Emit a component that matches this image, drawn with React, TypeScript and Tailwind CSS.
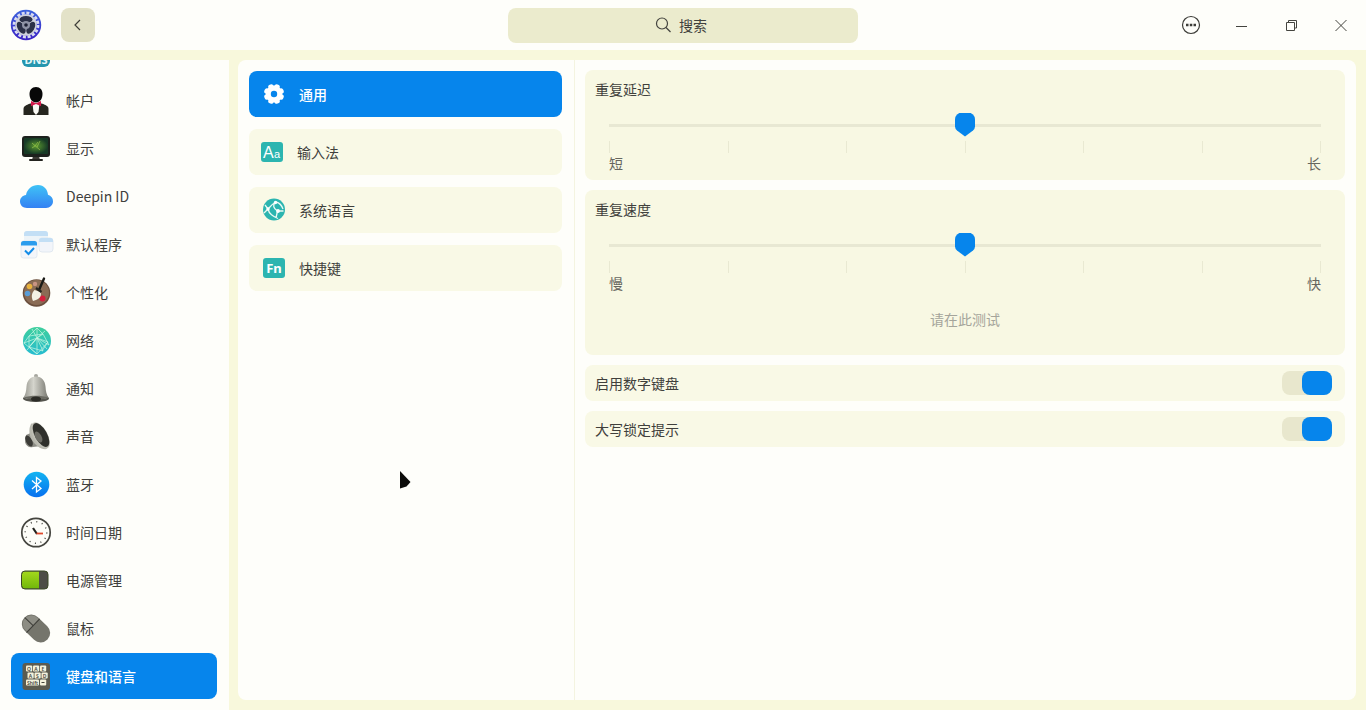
import { useState } from "react";
import type { ReactNode } from "react";

/* Sidebar artwork: every icon is drawn on a 32x32 grid */

function Art({ children }: { children: ReactNode }) {
  return (
    <svg viewBox="0 -1 32 32" className="h-8 w-8 shrink-0 overflow-visible" aria-hidden="true">
      {children}
    </svg>
  );
}

function AppLogo() {
  return (
    <svg viewBox="0 0 32 32" className="h-8 w-8 shrink-0" aria-hidden="true">
      <defs>
        <linearGradient id="logo" x1="0" y1="0" x2="0" y2="1">
          <stop offset="0" stopColor="#3d63dc" />
          <stop offset="1" stopColor="#3b22c4" />
        </linearGradient>
      </defs>
      <circle cx="16" cy="16" r="15.200" fill="url(#logo)" />
      <circle cx="16" cy="16" r="12" fill="none" stroke="#d9dcf2" strokeWidth="2.800" strokeDasharray="3 1.712" />
      <circle cx="16" cy="16" r="10.800" fill="#cfd1dc" />
      <ellipse cx="16" cy="10.500" rx="6.500" ry="3.600" fill="#2c3148" />
      <ellipse cx="16" cy="10.500" rx="6.500" ry="3.600" fill="#2c3148" transform="rotate(120 16 16)" />
      <ellipse cx="16" cy="10.500" rx="6.500" ry="3.600" fill="#2c3148" transform="rotate(240 16 16)" />
      <circle cx="16" cy="16" r="4" fill="#8f93a6" />
      <circle cx="16" cy="16" r="1.800" fill="#1d2034" />
    </svg>
  );
}

function BootIcon() {
  return (
    <Art>
      <rect x="2" y="3" width="28" height="27" rx="6" fill="#2596ae" />
      <text x="16" y="27" textAnchor="middle" fontSize="11" fontWeight="700" fill="#e5f7f8" fontFamily="Noto Sans">
        DNS
      </text>
    </Art>
  );
}

function AccountIcon() {
  return (
    <Art>
      <path d="M3.500 30V24c0-2.500 2-4 7-5.500h11c5 1.500 7 3 7 5.500v6z" fill="#26261f" />
      <path d="M12.500 18.500h7L18.500 27 16 30l-2.500-3z" fill="#fafaf5" />
      <path d="M16 2c4.200 0 6.500 3 6.500 7 0 4.500-2.500 8.500-6.500 8.500S9.500 13.500 9.500 9c0-4 2.300-7 6.500-7z" fill="#080808" />
      <path d="M11 16l5 2.200L21 16v5.200L16 19l-5 2.200z" fill="#d3184a" />
    </Art>
  );
}

function DisplayIcon() {
  return (
    <Art>
      <defs>
        <radialGradient id="screen">
          <stop offset="0" stopColor="#5b9a30" />
          <stop offset="1" stopColor="#173a26" />
        </radialGradient>
      </defs>
      <path d="M12 27l1-4h6l1 4z" fill="#3a3a34" />
      <rect x="9" y="26" width="14" height="2" rx="1" fill="#23231f" />
      <rect x="2" y="3" width="28" height="21" rx="3" fill="#1d211d" />
      <rect x="4" y="5" width="24" height="16" rx="1" fill="url(#screen)" />
      <path d="M12 10l8 7M18 9l-3 4-3 2M20 8l-3 6" fill="none" stroke="#9ac54a" opacity=".7" />
    </Art>
  );
}

function CloudIcon() {
  return (
    <Art>
      <defs>
        <linearGradient id="cloud" x1="0" y1="0" x2="0" y2="1">
          <stop offset="0" stopColor="#3fc3f6" />
          <stop offset="1" stopColor="#3481f3" />
        </linearGradient>
      </defs>
      <path
        d="M7 27C3 27 0 24.200 0 20.500c0-3.500 2.500-6 6-6.500C7.200 8 12 4 18 4c6 0 9.500 4.500 10 9.800 3.200.8 5 3.500 5 6.500 0 3.900-3 6.700-7 6.700z"
        fill="url(#cloud)"
      />
    </Art>
  );
}

function DefaultAppsIcon() {
  return (
    <Art>
      <rect x="4" y="2" width="24" height="16" rx="3" fill="#edf4f8" />
      <path d="M4 7V5a3 3 0 0 1 3-3h18a3 3 0 0 1 3 3v2z" fill="#c3dff5" />
      <rect x="19" y="9" width="14" height="14" rx="3" fill="#f2f5fa" stroke="#dce4ee" strokeWidth=".8" />
      <path d="M19 13v-1.500a2.500 2.500 0 0 1 2.500-2.500h9A2.500 2.500 0 0 1 33 11.500V13z" fill="#c3dff5" />
      <rect x="1" y="12" width="16" height="17" rx="2.500" fill="#f3f6fa" stroke="#dce4ee" strokeWidth=".8" />
      <path d="M1 16.500v-2A2.500 2.500 0 0 1 3.500 12h11a2.500 2.500 0 0 1 2.500 2.500v2z" fill="#2a9ced" />
      <path d="M5 21.500l3.500 3.500 5.500-6" fill="none" stroke="#128ce8" strokeWidth="2" />
    </Art>
  );
}

function PaletteIcon() {
  return (
    <Art>
      <circle cx="16.500" cy="16" r="13.800" fill="#6c503e" />
      <circle cx="16.500" cy="15.500" r="12.500" fill="#8a6c55" />
      <circle cx="9.500" cy="9.500" r="2.800" fill="#e8b23d" />
      <circle cx="7.500" cy="16.500" r="2.800" fill="#5a9dd6" />
      <circle cx="15" cy="7" r="2.200" fill="#c99483" />
      <circle cx="22.500" cy="21.500" r="3" fill="#d4203d" />
      <path d="M24 1.500L19 13" stroke="#1a1a16" strokeWidth="2.400" strokeLinecap="round" />
      <path d="M14.500 13l6 2c1.500 4-1 7.500-7.500 9-2-4-1.500-8 1.500-11z" fill="#f4f1e5" />
      <path d="M16 11l5.500 4" stroke="#252520" strokeWidth="2.200" />
    </Art>
  );
}

function NetworkIcon() {
  return (
    <Art>
      <defs>
        <linearGradient id="net" x1="0" y1="0" x2="0" y2="1">
          <stop offset="0" stopColor="#3fcf9c" />
          <stop offset="1" stopColor="#26bcd0" />
        </linearGradient>
      </defs>
      <circle cx="17" cy="16" r="14" fill="url(#net)" />
      <path
        d="M17 3l-8 8-5 7 13-5 12 7-6-11-6-6v26l-8-7 8-9 11 4-6 9M9 11l0 11 8-9 6-4-14 2M4 18l13 11 11-12M9 22l14 4M17 13l6 13M17 13L7 25M17 13l8-7M17 13l10 11M12 4l5 9"
        fill="none"
        stroke="#c5f7e3"
        strokeWidth=".7"
      />
    </Art>
  );
}

function BellIcon() {
  return (
    <Art>
      <defs>
        <linearGradient id="bell">
          <stop offset="0" stopColor="#97978f" />
          <stop offset=".4" stopColor="#d5d5cd" />
          <stop offset="1" stopColor="#77776f" />
        </linearGradient>
      </defs>
      <circle cx="16" cy="3" r="2" fill="#a6a69e" />
      <ellipse cx="16" cy="25.500" rx="13" ry="3.500" fill="#55554e" />
      <path d="M16 3.500c6 0 9 4.500 9.500 10 .3 5 1 8 3 11-3 2.500-22 2.500-25 0 2-3 2.700-6 3-11C7 8 10 3.500 16 3.500z" fill="url(#bell)" />
      <path d="M4 24.500c6-2.500 18-2.500 24 0-3 2.500-21 2.500-24 0z" fill="#6b6b63" />
      <ellipse cx="16" cy="26" rx="5" ry="2.500" fill="#2c2c27" />
    </Art>
  );
}

function SpeakerIcon() {
  return (
    <Art>
      <path d="M6 14l-1 7c1 4 4 6 8 5l8-1-8-14z" fill="#8c8c84" />
      <ellipse cx="9" cy="20" rx="3" ry="6" transform="rotate(-28 9 20)" fill="#3c3c37" />
      <path d="M12 2c-3 3-4 11 0 17s9 10 15 9z" fill="#b8b8ae" />
      <ellipse cx="20.500" cy="14.500" rx="7" ry="14.500" transform="rotate(-29 20.500 14.500)" fill="#c0c0b6" />
      <ellipse cx="21" cy="14" rx="6" ry="13.200" transform="rotate(-29 21 14)" fill="#2f302b" />
      <ellipse cx="18.500" cy="16" rx="3" ry="6" transform="rotate(-29 18.500 16)" fill="#6d6d65" />
    </Art>
  );
}

function BluetoothIcon() {
  return (
    <Art>
      <defs>
        <linearGradient id="bt" x1="0" y1="0" x2="0" y2="1">
          <stop offset="0" stopColor="#12b4f1" />
          <stop offset="1" stopColor="#0870ef" />
        </linearGradient>
      </defs>
      <circle cx="16.500" cy="15.500" r="12.800" fill="url(#bt)" />
      <path d="M12 11.500l9 8-4.500 3.500V8.500l4.500 3.500-9 8" fill="none" stroke="#fff" strokeWidth="1.300" />
    </Art>
  );
}

function ClockIcon() {
  return (
    <Art>
      <circle cx="16" cy="15.500" r="14.200" fill="#fdfdf8" stroke="#45453f" strokeWidth="1.700" />
      <circle cx="16" cy="15.500" r="10.800" fill="none" stroke="#45453f" strokeWidth="1.500" strokeDasharray="1 4.655" />
      <path d="M13 11l4 6" stroke="#22221e" strokeWidth="2.200" />
      <path d="M16.500 16.500H23" stroke="#e0492c" strokeWidth="1.800" />
    </Art>
  );
}

function PowerIcon() {
  return (
    <Art>
      <defs>
        <linearGradient id="power" x1="0" y1="0" x2="0" y2="1">
          <stop offset="0" stopColor="#a3d81c" />
          <stop offset="1" stopColor="#72b80a" />
        </linearGradient>
      </defs>
      <rect x="1.500" y="6" width="26.500" height="18" rx="3.500" fill="#4d4d46" />
      <path d="M19 6.500v17H5a3 3 0 0 1-3-3V9.500a3 3 0 0 1 3-3z" fill="url(#power)" />
      <rect x="1.500" y="6" width="26.500" height="18" rx="3.500" fill="none" stroke="#3b4a24" />
    </Art>
  );
}

function MouseIcon() {
  return (
    <Art>
      <g transform="rotate(-46 16 15.500)">
        <rect x="6.500" y="-.5" width="19" height="32" rx="9.500" fill="#75756c" />
        <path d="M7.500 11V9A8.500 8.500 0 0 1 24.500 9v2z" fill="#8d8d84" />
        <path d="M6.500 11.500h19M16 0v11.500" stroke="#3e3e39" />
      </g>
    </Art>
  );
}

function KeyboardIcon() {
  const rows = [
    { x: 6, y: 4.5, keys: ["Q", "A", "E"] },
    { x: 7.5, y: 11.5, keys: ["A", "S", "D"] },
  ];
  return (
    <Art>
      <rect x="2.500" y="2" width="27.500" height="27" rx="3" fill="#5b5b50" />
      {rows.map((row) =>
        row.keys.map((key, k) => (
          <g key={key}>
            <rect x={row.x + k * 7} y={row.y} width="6.200" height="6" rx="1" fill="#f4f2dc" />
            <text
              x={row.x + 3 + k * 7}
              y={row.y + 5}
              textAnchor="middle"
              fontSize="5"
              fontWeight="600"
              fill="#45453b"
              fontFamily="Noto Sans"
            >
              {key}
            </text>
          </g>
        ))
      )}
      <rect x="6" y="18.500" width="13" height="6" rx="1" fill="#f4f2dc" />
      <text x="12.500" y="23.500" textAnchor="middle" fontSize="5" fontWeight="600" fill="#45453b" fontFamily="Noto Sans">
        Shift
      </text>
      <rect x="20" y="18.500" width="6.200" height="6" rx="1" fill="#f4f2dc" />
      <path d="M21.500 21.500h3" stroke="#45453b" />
    </Art>
  );
}

/* Sub-page icons */

function GearIcon() {
  return (
    <svg viewBox="0 0 24 24" className="h-6 w-6 shrink-0" aria-hidden="true">
      <circle cx="13" cy="12" r="8.400" fill="#fff" />
      {[0, 45, 90, 135].map((deg) => (
        <rect key={deg} x="10.200" y="1.800" width="5.600" height="20.400" rx="2.400" transform={`rotate(${deg + 22.5} 13 12)`} fill="#fff" />
      ))}
      <circle cx="13" cy="12" r="3.200" fill="#0685ec" />
    </svg>
  );
}

function InputMethodIcon() {
  return (
    <svg viewBox="0 0 22 24" className="h-6 w-[22px] shrink-0" aria-hidden="true">
      <rect x="0" y="2" width="22" height="20" rx="3" fill="#2cb5b0" />
      <text x="2" y="18" fontSize="16" fill="#fff" fontFamily="Liberation Sans">
        A
      </text>
      <text x="13" y="18" fontSize="11" fill="#fff" fontFamily="Liberation Sans">
        a
      </text>
    </svg>
  );
}

function GlobeIcon() {
  return (
    <svg viewBox="0 0 24 24" className="h-6 w-6 shrink-0" aria-hidden="true">
      <circle cx="13" cy="11.500" r="11" fill="#2cb5b0" />
      <path
        d="M4 7l3 4c3-4 6-6 8-7M7 11c1 5 5 7 10 9.500M14 4c-2 4-2 6 2.500 9l6 0M16.500 13l-1.500 7M15 4c4 1 6 4 7 7M7 11l-4 4"
        fill="none"
        stroke="#eafaf4"
        strokeWidth="1.300"
      />
      <circle cx="7" cy="11" r="1.700" fill="#fff" />
      <circle cx="14.500" cy="4.500" r="1.700" fill="#fff" />
      <circle cx="17" cy="13" r="1.900" fill="#fff" />
    </svg>
  );
}

function FnIcon() {
  return (
    <svg viewBox="0 0 24 24" className="h-6 w-6 shrink-0" aria-hidden="true">
      <rect x="2" y="2" width="22" height="20" rx="3" fill="#2cb5b0" />
      <text x="13" y="17" textAnchor="middle" fontSize="13" fontWeight="700" fill="#fff" fontFamily="Noto Sans">
        Fn
      </text>
    </svg>
  );
}

const MODULES = [
  { label: "启动设置", icon: <BootIcon /> },
  { label: "帐户", icon: <AccountIcon /> },
  { label: "显示", icon: <DisplayIcon /> },
  { label: "Deepin ID", icon: <CloudIcon /> },
  { label: "默认程序", icon: <DefaultAppsIcon /> },
  { label: "个性化", icon: <PaletteIcon /> },
  { label: "网络", icon: <NetworkIcon /> },
  { label: "通知", icon: <BellIcon /> },
  { label: "声音", icon: <SpeakerIcon /> },
  { label: "蓝牙", icon: <BluetoothIcon /> },
  { label: "时间日期", icon: <ClockIcon /> },
  { label: "电源管理", icon: <PowerIcon /> },
  { label: "鼠标", icon: <MouseIcon /> },
  { label: "键盘和语言", icon: <KeyboardIcon /> },
];

const PAGES = [
  { label: "通用", icon: <GearIcon /> },
  { label: "输入法", icon: <InputMethodIcon /> },
  { label: "系统语言", icon: <GlobeIcon /> },
  { label: "快捷键", icon: <FnIcon /> },
];

function TitleBar() {
  return (
    <header className="grid h-[50px] shrink-0 grid-cols-[1fr_350px_1fr] items-center">
      <div className="flex items-center gap-[19px] pl-[10px]">
        <AppLogo />
        <button
          type="button"
          aria-label="返回"
          className="flex h-[34px] w-[34px] items-center justify-center rounded-lg bg-[#e3e2c8]"
        >
          <svg viewBox="0 0 16 16" className="h-4 w-4" fill="none" stroke="#3d3d38" strokeWidth="1.200">
            <path d="M10 3L5 8l5 5" />
          </svg>
        </button>
      </div>

      <button
        type="button"
        className="flex h-[35px] items-center justify-center gap-2 rounded-lg bg-[#ebebcd] pr-1"
      >
        <svg viewBox="0 0 16 16" className="h-4 w-4" fill="none" stroke="#44443f" strokeWidth="1.200">
          <circle cx="7" cy="6.500" r="5.500" />
          <path d="M11 10.500l4.500 4.500" />
        </svg>
        搜索
      </button>

      <div className="flex justify-end">
        <button type="button" aria-label="菜单" className="flex h-[50px] w-[50px] items-center justify-center">
          <svg viewBox="0 0 20 20" className="h-5 w-5" fill="none" stroke="#3d3d38">
            <circle cx="10" cy="10" r="8.500" strokeWidth="1.200" />
            <path d="M5 10h2.500M8.800 10h2.500M12.500 10H15" strokeWidth="2.400" />
          </svg>
        </button>
        <button type="button" aria-label="最小化" className="flex h-[50px] w-[50px] items-center justify-center">
          <svg viewBox="0 0 12 12" className="h-3 w-3" stroke="#44443f">
            <path d="M1 7.500h11" />
          </svg>
        </button>
        <button type="button" aria-label="还原" className="flex h-[50px] w-[50px] items-center justify-center">
          <svg viewBox="0 0 12 12" className="h-3 w-3" fill="none" stroke="#44443f">
            <path d="M1.500 3.500h8v8h-8zM3.500 3.500v-2h8v7.500H10" />
          </svg>
        </button>
        <button type="button" aria-label="关闭" className="flex h-[50px] w-[50px] items-center justify-center">
          <svg viewBox="0 0 12 12" className="h-3 w-3" stroke="#44443f">
            <path d="M.5 1l11 11M11.500 1l-11 11" />
          </svg>
        </button>
      </div>
    </header>
  );
}

function SliderCard({
  id,
  title,
  from,
  to,
  children,
}: {
  id: string;
  title: string;
  from: string;
  to: string;
  children?: ReactNode;
}) {
  return (
    <section className="rounded-lg bg-[#f8f8e3] px-[10px] py-[7px]">
      <label htmlFor={id} className="block leading-6">
        {title}
      </label>
      <div className="px-[14px] pt-3">
        <input
          id={id}
          type="range"
          min={1}
          max={7}
          defaultValue={4}
          className="block h-6 w-full appearance-none bg-transparent [&::-webkit-slider-runnable-track]:h-[3px] [&::-webkit-slider-runnable-track]:bg-[#e8e8d3] [&::-webkit-slider-thumb]:mt-[-11px] [&::-webkit-slider-thumb]:h-6 [&::-webkit-slider-thumb]:w-5 [&::-webkit-slider-thumb]:appearance-none [&::-webkit-slider-thumb]:bg-[#0685ec] [&::-webkit-slider-thumb]:[clip-path:path('M7_0h6a7_7_0_0_1_7_7v7q0_2_-2_4l-8_6l-8_-6q-2_-2_-2_-4v-7a7_7_0_0_1_7_-7z')]"
        />
        <div className="flex justify-between pt-1" aria-hidden="true">
          {Array.from({ length: 7 }, (_, i) => (
            <span key={i} className="h-3 w-px bg-[#e9e9d2]" />
          ))}
        </div>
        <div className="flex justify-between leading-5 text-[#66665f]">
          <span>{from}</span>
          <span>{to}</span>
        </div>
      </div>
      {children}
    </section>
  );
}

function SwitchCard({ label }: { label: string }) {
  return (
    <label className="flex h-9 items-center justify-between rounded-lg bg-[#f9f9e6] pr-[13px] pl-[10px]">
      {label}
      <input
        type="checkbox"
        role="switch"
        defaultChecked
        className="h-6 w-[50px] appearance-none rounded-lg bg-[#e8e7cd] before:block before:h-6 before:w-[30px] before:rounded-lg before:bg-[#b9b9a6] checked:before:ml-5 checked:before:bg-[#0685ec]"
      />
    </label>
  );
}

export default function App() {
  const [module, setModule] = useState("键盘和语言");
  const [page, setPage] = useState("通用");

  return (
    <div className="relative flex h-screen flex-col overflow-hidden bg-[#fefefa] font-['Noto_Sans_CJK_SC',sans-serif] text-sm text-[#40403c]">
      <TitleBar />
      <div className="h-[10px] shrink-0 bg-[#f8f8dc]" />

      <div className="flex min-h-0 flex-1">
        {/* The list is scrolled to its end, so the first module is cut off */}
        <nav className="flex w-[229px] shrink-0 flex-col justify-end gap-[2px] overflow-hidden pr-3 pb-[11px] pl-[11px]">
          {MODULES.map((item) => (
            <button
              key={item.label}
              type="button"
              onClick={() => setModule(item.label)}
              className={`flex h-[46px] shrink-0 items-center gap-[14px] rounded-lg pl-[9px] ${
                module === item.label ? "bg-[#0685ec] font-medium text-white" : ""
              }`}
            >
              {item.icon}
              {item.label}
            </button>
          ))}
        </nav>

        <div className="flex min-w-0 flex-1 bg-[#f8f8dc] pr-[10px] pb-[10px] pl-[9px]">
          <main className="flex min-w-0 flex-1 rounded-lg bg-[#fefefa]">
            <div className="flex w-[337px] shrink-0 flex-col gap-3 border-r border-[#f4f4e0] pt-[11px] pr-3 pl-[11px]">
              {PAGES.map((item) => (
                <button
                  key={item.label}
                  type="button"
                  onClick={() => setPage(item.label)}
                  className={`flex h-[46px] items-center gap-[14px] rounded-lg pl-3 ${
                    page === item.label ? "bg-[#0685ec] font-medium text-white" : "bg-[#f9f9e6]"
                  }`}
                >
                  {item.icon}
                  {item.label}
                </button>
              ))}
            </div>

            <div className="flex min-w-0 flex-1 flex-col gap-[10px] pt-[10px] pr-[11px] pl-[10px]">
              <SliderCard id="delay" title="重复延迟" from="短" to="长" />
              <SliderCard id="rate" title="重复速度" from="慢" to="快">
                <input
                  type="text"
                  aria-label="请在此测试"
                  placeholder="请在此测试"
                  className="mt-2 mb-[11px] block h-9 w-full bg-transparent text-center placeholder:text-[#a5a59b]"
                />
              </SliderCard>
              <SwitchCard label="启用数字键盘" />
              <SwitchCard label="大写锁定提示" />
            </div>
          </main>
        </div>
      </div>

      {/* Mouse pointer */}
      <svg viewBox="0 0 14 20" className="pointer-events-none absolute top-[470px] left-[398px] h-5 w-[14px]" aria-hidden="true">
        <path d="M2 1l10.500 11-4 4.500L2 18.500z" fill="#0c0c0a" />
      </svg>
    </div>
  );
}
